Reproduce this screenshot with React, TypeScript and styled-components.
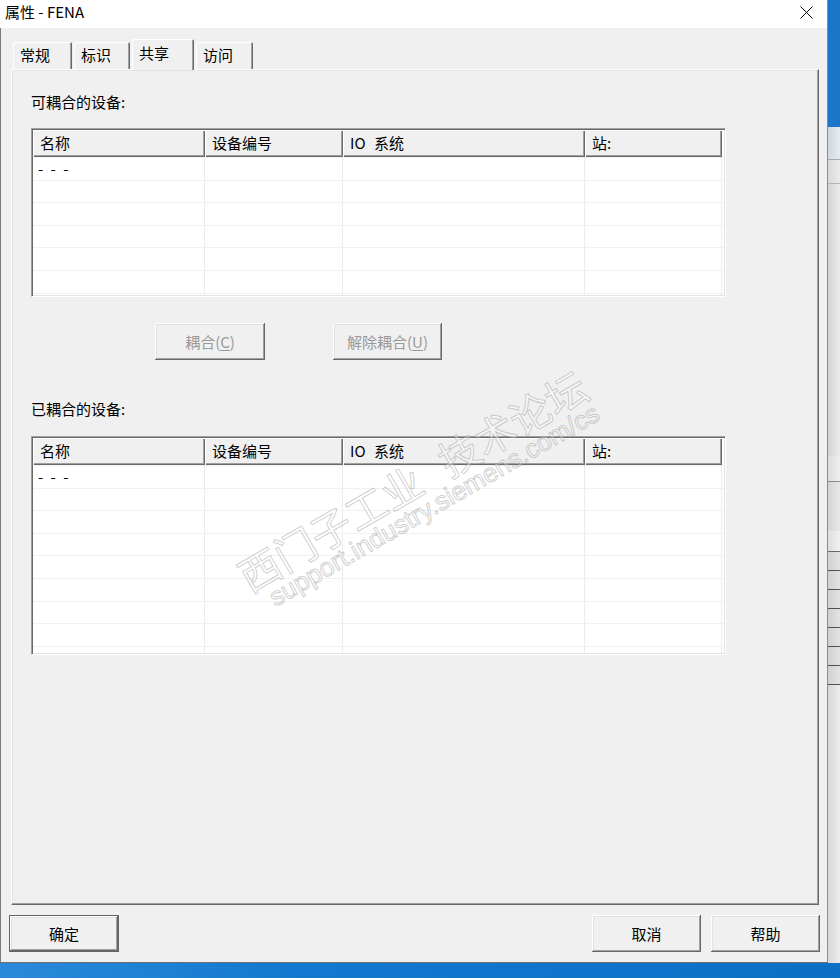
import React from 'react';
import styled, { createGlobalStyle } from 'styled-components';

const GlobalStyle = createGlobalStyle`
  html, body {
    margin: 0;
    padding: 0;
  }
  body {
    width: 840px;
    height: 978px;
    overflow: hidden;
    background: #1479d0;
    font-family: "Noto Sans CJK SC", "Noto Sans", sans-serif;
    color: #000;
  }
  * {
    box-sizing: border-box;
  }
`;

const Screen = styled.div`
  position: relative;
  width: 840px;
  height: 978px;
  overflow: hidden;
  display: flex;
  flex-direction: column;
`;

const Desktop = styled.div`
  display: flex;
  height: 963px;
`;

const Taskbar = styled.div`
  height: 15px;
  background: linear-gradient(90deg, #2a8ad9, #1279d0 35%, #0b6fc6);
`;

const Dialog = styled.div`
  width: 828px;
  height: 963px;
  flex: none;
  background: #f0f0f0;
  border-right: 1px solid #8c8c8c;
  border-bottom: 1px solid #6f6f6f;
  display: flex;
  flex-direction: column;
`;

const TitleBar = styled.div`
  height: 28px;
  flex: none;
  background: #fff;
  display: flex;
  align-items: center;
  justify-content: space-between;
  padding: 0 0 4px 5px;
  font-size: 15px;
  line-height: 20px;
`;

const CloseBox = styled.div`
  width: 42px;
  height: 24px;
  display: flex;
  align-items: center;
  justify-content: center;
`;

const Body = styled.div`
  flex: 1;
  display: flex;
  flex-direction: column;
  padding: 11px 8px 10px 10px;
  border-left: 1px solid #7d7d7d;
`;

const TabStrip = styled.div`
  height: 30px;
  flex: none;
  display: flex;
  align-items: flex-end;
  gap: 2px;
  padding-left: 2px;
  position: relative;
  z-index: 1;
`;

const Tab = styled.div<{ $active?: boolean; $w: number }>`
  width: ${p => p.$w}px;
  height: ${p => (p.$active ? 31 : 27)}px;
  margin-bottom: ${p => (p.$active ? -1 : 0)}px;
  background: #f0f0f0;
  border-radius: 2px 2px 0 0;
  box-shadow: inset 1px 1px 0 #ffffff, inset -1px 0 0 #696969, inset -2px 0 0 #a0a0a0;
  padding: ${p => (p.$active ? 4 : 3)}px 0 0 7px;
  font-size: 15px;
  line-height: 20px;
`;

const Panel = styled.div`
  height: 836px;
  flex: none;
  background: #f0f0f0;
  border-top: 1px solid #ffffff;
  border-left: 1px solid #ffffff;
  border-right: 1px solid #696969;
  border-bottom: 1px solid #696969;
  box-shadow: inset -1px -1px 0 #a0a0a0, inset 1px 1px 0 #e3e3e3;
  padding: 22px 0 0 19px;
  display: flex;
  flex-direction: column;
  align-items: flex-start;
`;

const SectionLabel = styled.div<{ $gap: number }>`
  margin-top: ${p => p.$gap}px;
  font-size: 15px;
  line-height: 20px;
  height: 20px;
`;

const Table = styled.div<{ $h: number; $gap: number }>`
  margin-top: ${p => p.$gap}px;
  width: 695px;
  height: ${p => p.$h}px;
  flex: none;
  background: #fff;
  border-top: 1px solid #a0a0a0;
  border-left: 1px solid #a0a0a0;
  border-right: 1px solid #ffffff;
  border-bottom: 1px solid #ffffff;
  box-shadow: inset 1px 1px 0 #696969, inset -1px -1px 0 #e3e3e3;
  padding: 1px;
  display: flex;
  flex-direction: column;
  overflow: hidden;
`;

const HeaderRow = styled.div`
  display: flex;
  height: 27px;
  flex: none;
`;

const HeadCell = styled.div<{ $w: number }>`
  width: ${p => p.$w}px;
  flex: none;
  background: #f0f0f0;
  box-shadow: inset 1px 1px 0 #ffffff, inset -1px -1px 0 #696969, inset -2px -2px 0 #a0a0a0;
  padding-left: 7px;
  font-size: 15px;
  line-height: 26px;
  white-space: nowrap;
  word-spacing: 5px;
`;

const RowList = styled.div`
  flex: 1;
  overflow: hidden;
  border-top: 1px solid #f3f3f3;
`;

const Row = styled.div`
  display: flex;
  height: 22.6px;
  border-bottom: 1px solid #f0f0f0;
`;

const Cell = styled.div<{ $w: number }>`
  width: ${p => p.$w}px;
  flex: none;
  border-right: 1px solid #ececec;
  padding-left: 5px;
  font-size: 15px;
  line-height: 22px;
  letter-spacing: 2px;
  white-space: pre;
`;

const ButtonRow = styled.div`
  margin-top: 26px;
  margin-left: 124px;
  display: flex;
  gap: 68px;
`;

const Button = styled.button<{ $w: number; $primary?: boolean }>`
  width: ${p => p.$w}px;
  height: 37px;
  flex: none;
  padding: 0;
  background: #f0f0f0;
  border: ${p => (p.$primary ? '1px solid #646464' : 'none')};
  box-shadow: inset -1px -1px 0 #696969, inset 1px 1px 0 #ffffff, inset -2px -2px 0 #a0a0a0,
    inset 2px 2px 0 #e3e3e3;
  font-family: "Noto Sans CJK SC", "Noto Sans", sans-serif;
  font-size: 15px;
  line-height: 20px;
  color: ${p => (p.disabled ? '#9a9a9a' : '#000')};

  u {
    text-underline-offset: 2px;
  }
`;

const Footer = styled.div`
  margin: 10px -1px 0 -2px;
  height: 37px;
  display: flex;
  justify-content: space-between;
`;

const FooterGroup = styled.div`
  display: flex;
  gap: 10px;
`;

const RightStrip = styled.div`
  flex: 1;
  display: flex;
  flex-direction: column;
  background: linear-gradient(90deg, #d6d6d6, #ededed);
`;

const StripBand = styled.div<{ $h: number; $bg: string; $line?: string }>`
  height: ${p => p.$h}px;
  flex: none;
  background: ${p => p.$bg};
  border-bottom: ${p => (p.$line ? `1px solid ${p.$line}` : 'none')};
`;

const Watermark = styled.span<{ $x: number; $y: number; $size: number; $latin?: boolean }>`
  position: absolute;
  left: ${p => p.$x}px;
  top: ${p => p.$y}px;
  transform: translate(-50%, -50%) rotate(-30deg);
  font-family: ${p => (p.$latin ? '"Liberation Sans", Arial, sans-serif' : '"Noto Sans CJK SC", sans-serif')};
  font-size: ${p => p.$size}px;
  line-height: 1;
  white-space: nowrap;
  word-spacing: 16px;
  color: rgba(255, 255, 255, 0.35);
  -webkit-text-stroke: 1px rgba(150, 150, 150, 0.45);
  pointer-events: none;
`;

const columns = [
  { title: '名称', w: 172 },
  { title: '设备编号', w: 138 },
  { title: 'IO 系统', w: 242 },
  { title: '站:', w: 137 },
];

const strip = [
  { h: 127, bg: '#1b75c9' },
  { h: 33, bg: 'linear-gradient(90deg, #cfd6df, #e6ebf1)', line: '#a9a9a9' },
  { h: 24, bg: 'linear-gradient(90deg, #d8d8d8, #ececec)', line: '#b4b4b4' },
  { h: 272, bg: 'linear-gradient(90deg, #d2d2d2, #ececec)' },
  { h: 26, bg: 'linear-gradient(90deg, #dcdcdc, #efefef)', line: '#8c8c8c' },
  { h: 49, bg: 'linear-gradient(90deg, #d4d4d4, #e8e8e8)' },
  { h: 21, bg: 'linear-gradient(90deg, #dedede, #f0f0f0)', line: '#6a6a6a' },
  { h: 19, bg: 'linear-gradient(90deg, #d0d0d0, #e4e4e4)', line: '#505050' },
  { h: 19, bg: 'linear-gradient(90deg, #d0d0d0, #e4e4e4)', line: '#505050' },
  { h: 19, bg: 'linear-gradient(90deg, #d0d0d0, #e4e4e4)', line: '#505050' },
  { h: 19, bg: 'linear-gradient(90deg, #d0d0d0, #e4e4e4)', line: '#505050' },
  { h: 19, bg: 'linear-gradient(90deg, #d0d0d0, #e4e4e4)', line: '#505050' },
  { h: 19, bg: 'linear-gradient(90deg, #d0d0d0, #e4e4e4)', line: '#505050' },
  { h: 19, bg: 'linear-gradient(90deg, #d0d0d0, #e4e4e4)', line: '#505050' },
];

const DeviceTable: React.FC<{ height: number; gap: number; rows: number }> = ({ height, gap, rows }) => (
  <Table $h={height} $gap={gap}>
    <HeaderRow>
      {columns.map(c => (
        <HeadCell key={c.title} $w={c.w}>
          {c.title}
        </HeadCell>
      ))}
    </HeaderRow>
    <RowList>
      {Array.from({ length: rows }).map((_, i) => (
        <Row key={i}>
          {columns.map((c, j) => (
            <Cell key={c.title} $w={c.w}>
              {i === 0 && j === 0 ? '- - -' : ''}
            </Cell>
          ))}
        </Row>
      ))}
    </RowList>
  </Table>
);

export default function App() {
  return (
    <Screen>
      <GlobalStyle />
      <Desktop>
        <Dialog>
          <TitleBar>
            <span>属性 - FENA</span>
            <CloseBox>
              <svg width="13" height="13" viewBox="0 0 13 13">
                <path d="M0.5 0.5 L12.5 12.5 M12.5 0.5 L0.5 12.5" stroke="#000" strokeWidth="1" fill="none" />
              </svg>
            </CloseBox>
          </TitleBar>
          <Body>
            <TabStrip>
              <Tab $w={59}>常规</Tab>
              <Tab $w={56}>标识</Tab>
              <Tab $w={62} $active>
                共享
              </Tab>
              <Tab $w={57}>访问</Tab>
            </TabStrip>
            <Panel>
              <SectionLabel $gap={0}>可耦合的设备:</SectionLabel>
              <DeviceTable height={169} gap={16} rows={7} />
              <ButtonRow>
                <Button $w={110} disabled>
                  耦合(<u>C</u>)
                </Button>
                <Button $w={109} disabled>
                  解除耦合(<u>U</u>)
                </Button>
              </ButtonRow>
              <SectionLabel $gap={39}>已耦合的设备:</SectionLabel>
              <DeviceTable height={219} gap={17} rows={10} />
            </Panel>
            <Footer>
              <Button $w={110} $primary>
                确定
              </Button>
              <FooterGroup>
                <Button $w={109}>取消</Button>
                <Button $w={109}>帮助</Button>
              </FooterGroup>
            </Footer>
          </Body>
        </Dialog>
        <RightStrip>
          {strip.map((s, i) => (
            <StripBand key={i} $h={s.h} $bg={s.bg} $line={s.line} />
          ))}
        </RightStrip>
      </Desktop>
      <Taskbar />
      <Watermark $x={412} $y={480} $size={41}>
        西门子工业 技术论坛
      </Watermark>
      <Watermark $x={434} $y={505} $size={26} $latin>
        support.industry.siemens.com/cs
      </Watermark>
    </Screen>
  );
}
